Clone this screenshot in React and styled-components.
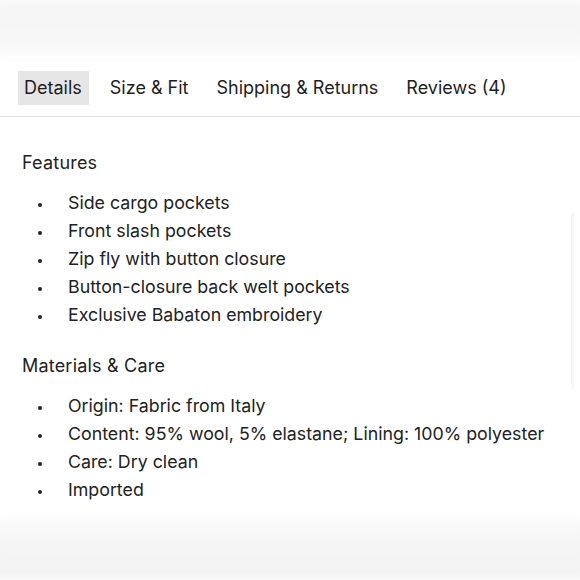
import React from "react";
import styled, { createGlobalStyle } from "styled-components";

const GlobalStyle = createGlobalStyle`
  html, body { margin: 0; padding: 0; background: #fff; }
  body { font-family: Inter, "Liberation Sans", sans-serif; color: #222; }
`;

const Page = styled.div`
  width: 580px;
  height: 580px;
  overflow: hidden;
  position: relative;
  display: flex;
  flex-direction: column;
  background: #fff;
`;

const Haze = styled.div`
  height: ${p => p.h}px;
  flex: ${p => (p.bottom ? "1" : "none")};
  background: ${p => p.bottom
    ? "linear-gradient(180deg, #fff 0%, #f6f6f6 30%, #f3f3f3 100%)"
    : "linear-gradient(180deg, #f6f6f6 0%, #f7f7f7 70%, #fff 100%)"};
  filter: blur(4px);
  margin: 0 -8px;
`;

const TabBar = styled.div`
  display: flex;
  align-items: center;
  gap: 15px;
  padding: 9px 18px 11px;
  border-bottom: 1px solid #e2e2e2;
`;

const Tab = styled.div`
  font-size: 18px;
  line-height: 34px;
  padding: 0 7px 0 6px;
  background: ${p => (p.active ? "#e6e6e6" : "transparent")};
  color: #1e1e1e;
`;

const Content = styled.div`
  padding: 32px 22px 0;
`;

const Heading = styled.div`
  font-size: 18px;
  line-height: 28px;
  letter-spacing: 0.2px;
  color: #222;
`;

const List = styled.ul`
  list-style: none;
  margin: 12px 0 23px;
  padding: 0;
  &:last-child { margin-bottom: 10px; }
`;

const Item = styled.li`
  position: relative;
  font-size: 17.8px;
  line-height: 28px;
  padding-left: 46px;
  color: #222;
  &::before {
    content: "";
    position: absolute;
    left: 16px;
    top: 14px;
    width: 4px;
    height: 4px;
    border-radius: 50%;
    background: #222;
  }
`;

const Scroll = styled.div`
  position: absolute;
  right: 6px;
  top: 213px;
  width: 3px;
  height: 176px;
  background: #f6f6f6;
`;

const tabs = ["Details", "Size & Fit", "Shipping & Returns", "Reviews (4)"];
const features = [
  "Side cargo pockets",
  "Front slash pockets",
  "Zip fly with button closure",
  "Button-closure back welt pockets",
  "Exclusive Babaton embroidery",
];
const materials = [
  "Origin: Fabric from Italy",
  "Content: 95% wool, 5% elastane; Lining: 100% polyester",
  "Care: Dry clean",
  "Imported",
];

export default function App() {
  return (
    <Page>
      <GlobalStyle />
      <Haze h={62} />
      <TabBar>
        {tabs.map((t, i) => (
          <Tab key={t} active={i === 0}>{t}</Tab>
        ))}
      </TabBar>
      <Content>
        <Heading>Features</Heading>
        <List>
          {features.map(f => <Item key={f}>{f}</Item>)}
        </List>
        <Heading>Materials &amp; Care</Heading>
        <List>
          {materials.map(m => <Item key={m}>{m}</Item>)}
        </List>
      </Content>
      <Scroll />
      <Haze h={0} bottom />
    </Page>
  );
}
